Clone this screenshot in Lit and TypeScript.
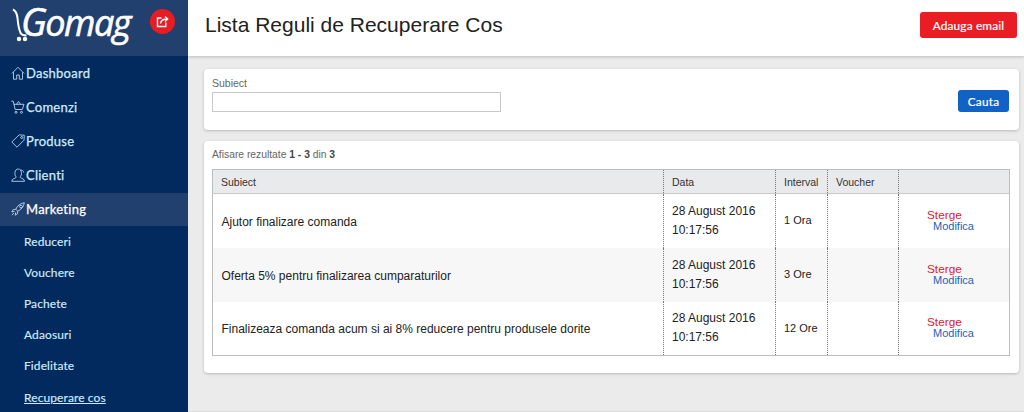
import { LitElement, html, css, svg } from "lit";
import { customElement } from "lit/decorators.js";

const icons: Record<string, unknown> = {
  home: svg`<path d="M.8 7.500 7 1.300l6.200 6.200M2.500 6.200V13.200h3.200V9h2.600v4.200h3.200V6.200"/>`,
  cart: svg`<path d="M.3 1.200H2.200L4.200 9.500H11.300L13 4.300H2.900M5.500 4.300 7.500 1.500 9.500 4.300"/><circle cx="5" cy="12.300" r="1"/><circle cx="10.500" cy="12.300" r="1"/>`,
  tag: svg`<path d="M8.200.8 13.300 1.300 13 6.200 6 13.200.8 8z"/><circle cx="10.700" cy="3.500" r="1"/>`,
  user: svg`<path d="M.8 13.300c0-2.500 2.600-2.700 4-3.500.4-.7.200-1.200-.3-1.900C3.800 6.800 3.800 5.500 4 4.200 4.300 2.200 5.600 1 7.200 1s2.900 1.200 3.200 3.200c.2 1.300.1 2.600-.6 3.700-.5.700-.7 1.200-.3 1.900 1.300.8 4 1 4 3.500z"/><path d="M9.500 2.200c1.800-.5 3 .8 3.200 2.300"/>`,
  rocket: svg`<path d="M4.800 7.300C6.300 3.800 9 1.500 13.300.7c-.6 4-3 6.900-6.500 8.500zM4.800 7.300l-2.700.4-1.300 2.200 2.800-.5M6.800 9.200l-.4 2.700-2.200 1.300.5-2.800M2.800 11 1 13.200M9 3.600a1.400 1.400 0 1 0 2 2 1.400 1.400 0 1 0-2-2"/>`,
};

@customElement("app-root")
export class AppRoot extends LitElement {
  static styles = css`
    :host { display: block; width: 1024px; height: 412px; overflow: hidden; background: #ebebeb; font-family: "Liberation Sans", Arial, sans-serif; }
    * { box-sizing: border-box; }
    .app { display: flex; height: 412px; }
    .side { width: 188px; flex: none; background: #032a5e; font-family: Lato, sans-serif; color: #cfeafc; }
    .brand { height: 56px; background: #22406e; display: flex; align-items: flex-start; position: relative; }
    .logo { font: italic 400 36px/42px "Open Sans", sans-serif; color: #fff; letter-spacing: -1.500px; margin: 0 0 0 21px; padding-right: 3px; white-space: nowrap; -webkit-text-stroke: .6px #fff; }
    .logo span { font-size: 38px; }
    .cartmark { position: absolute; left: 12px; top: 8px; width: 16px; height: 34px; fill: none; stroke: #fff; stroke-width: 2; }
    .share { width: 25px; height: 25px; border-radius: 50%; background: #e91c24; display: flex; align-items: center; justify-content: center; margin: 9px 13px 0 auto; }
    .share svg { width: 13px; height: 13px; fill: none; stroke: #fff; stroke-width: 1.400; }
    .nav { display: flex; flex-direction: column; }
    .item { height: 34px; display: flex; align-items: center; gap: 1px; padding-left: 11px; font-size: 13px; font-weight: 400; letter-spacing: .25px; -webkit-text-stroke: .25px currentColor; }
    .item svg { width: 14px; height: 14px; fill: none; stroke: #cfeafc; stroke-width: .8; flex: none; }
    .item.active { background: #22406e; height: 33px; margin-top: 1px; padding-bottom: 1px; color: #fff; }
    .subs { display: flex; flex-direction: column; }
    .sub { height: 31.100px; display: flex; align-items: center; padding-left: 24px; font-size: 12px; letter-spacing: .1px; -webkit-text-stroke: .15px currentColor; }
    .sub span.cur { text-decoration: underline; }
    .main { flex: 1; min-width: 0; display: flex; flex-direction: column; border-bottom: 1px solid #dcdcdc; }
    .head { height: 56px; background: #fff; box-shadow: 0 1px 3px rgba(0,0,0,.2); display: flex; align-items: center; justify-content: space-between; padding: 0 7px 6px 17px; }
    h1 { margin: 0; font-size: 21px; font-weight: 400; color: #222; }
    .btn { border: 0; border-radius: 3px; color: #fff; font: 400 11.800px Lato, sans-serif; padding: 0; letter-spacing: .2px; -webkit-text-stroke: .2px #fff; }
    .red { background: #ea1c24; width: 97px; height: 26px; }
    .blue { background: #1261c4; width: 51px; height: 22px; margin-top: 13px; }
    .content { padding: 13px 5px 0 16px; display: flex; flex-direction: column; gap: 11px; }
    .panel { background: #fff; border-radius: 4px; box-shadow: 0 1px 3px rgba(0,0,0,.22); padding: 8px 8px 0; }
    .search { height: 61px; display: flex; justify-content: space-between; align-items: flex-start; padding-right: 10px; }
    label { display: block; font-size: 10.500px; line-height: 12px; color: #666; margin-bottom: 3px; }
    .input { width: 289px; height: 20px; border: 1px solid #c9c9c9; display: block; background: #fff; padding: 0; }
    .results { height: 232px; }
    .count { font-size: 10.300px; line-height: 12px; color: #666; margin: 0 0 8px; }
    .count b { color: #444; }
    table { border-collapse: collapse; table-layout: fixed; width: 797px; border: 1px solid #bdbdbd; font-size: 12px; color: #222; }
    th { height: 24px; background: #e9eaec; font-weight: 400; font-size: 10.500px; color: #333; text-align: left; padding: 0 0 0 8px; border-bottom: 1px solid #c9c9c9; border-left: 1px dotted #777; }
    td { height: 54px; padding: 0 0 0 8px; border-left: 1px dotted #777; line-height: 19px; }
    td.first { padding: 3px 0 0 8.500px; }
    th:first-child, td:first-child { border-left: 0; }
    tr:nth-child(even) td { background: #f7f7f7; }
    .int { font-size: 11px; }
    .actions { line-height: 11px; padding: 0; }
    .del { color: #e3202a; display: block; margin-left: 28px; font-size: 11.800px; }
    .edit { color: #1e5fb8; display: block; margin-left: 34px; font-size: 11px; }
  `;

  private ic(n: string) {
    return html`<svg viewBox="0 0 14 14">${icons[n]}</svg>`;
  }

  render() {
    const rows = [
      ["Ajutor finalizare comanda", "1 Ora"],
      ["Oferta 5% pentru finalizarea cumparaturilor", "3 Ore"],
      ["Finalizeaza comanda acum si ai 8% reducere pentru produsele dorite", "12 Ore"],
    ];
    const nav = [["home", "Dashboard"], ["cart", "Comenzi"], ["tag", "Produse"], ["user", "Clienti"]];
    const subs = ["Reduceri", "Vouchere", "Pachete", "Adaosuri", "Fidelitate"];
    return html`<div class="app">
      <aside class="side">
        <div class="brand">
          <svg class="cartmark" viewBox="0 0 16 34"><path d="M1 1.500c3 1.500 4 4 4.500 8.500.4 5 1 10 3 15 1 1.800 3 2.500 6 2.500"/><circle cx="7" cy="31" r="1.200"/><circle cx="13" cy="31" r="1.200"/></svg>
          <div class="logo"><span>G</span>omag</div>
          <div class="share"><svg viewBox="0 0 13 13"><path d="M9.800 7.500v4h-8.300v-8.500h4M4.500 8.500c.5-3 2.500-4.500 6.500-4.500M9 1.500l2.700 2.500-2.700 2.500"/></svg></div>
        </div>
        <nav class="nav">
          ${nav.map(([i, t]) => html`<div class="item">${this.ic(i)}<span>${t}</span></div>`)}
          <div class="item active">${this.ic("rocket")}<span>Marketing</span></div>
          <div class="subs">
            ${subs.map((s) => html`<div class="sub"><span>${s}</span></div>`)}
            <div class="sub"><span class="cur">Recuperare cos</span></div>
          </div>
        </nav>
      </aside>
      <main class="main">
        <header class="head">
          <h1>Lista Reguli de Recuperare Cos</h1>
          <button class="btn red">Adauga email</button>
        </header>
        <div class="content">
          <section class="panel search">
            <div><label>Subiect</label><input class="input" /></div>
            <button class="btn blue">Cauta</button>
          </section>
          <section class="panel results">
            <div class="count">Afisare rezultate <b>1 - 3</b> din <b>3</b></div>
            <table>
              <colgroup><col style="width:451px" /><col style="width:112px" /><col style="width:52px" /><col style="width:71px" /><col style="width:111px" /></colgroup>
              <thead><tr><th>Subiect</th><th>Data</th><th>Interval</th><th>Voucher</th><th></th></tr></thead>
              <tbody>
                ${rows.map(([s, i]) => html`<tr>
                  <td class="first">${s}</td><td>28 August 2016<br />10:17:56</td><td class="int">${i}</td><td></td>
                  <td class="actions"><span class="del">Sterge</span><span class="edit">Modifica</span></td>
                </tr>`)}
              </tbody>
            </table>
          </section>
        </div>
      </main>
    </div>`;
  }
}
